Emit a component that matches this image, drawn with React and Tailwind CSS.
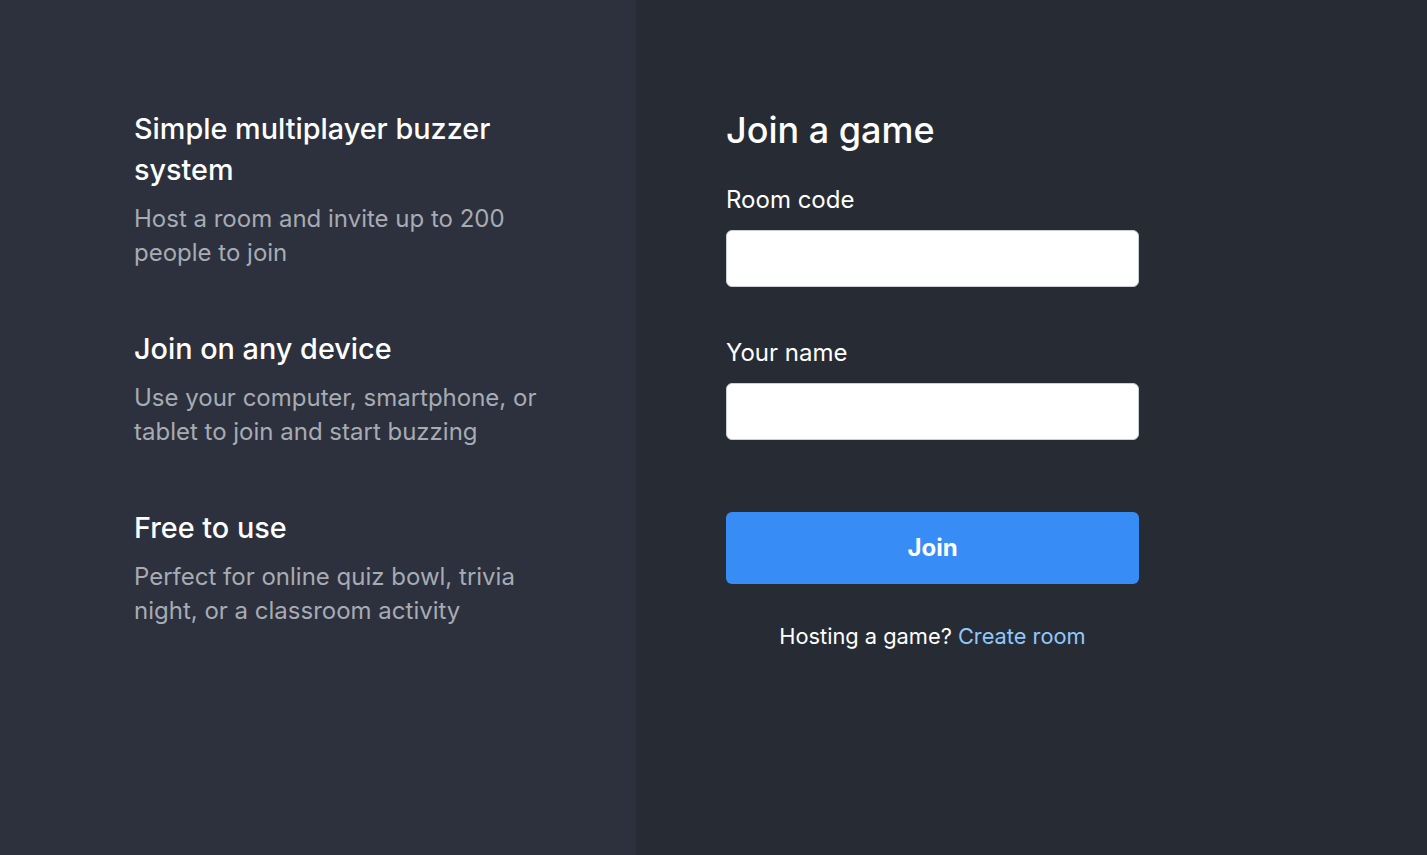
import React from "react";

const features = [
  {
    title: "Simple multiplayer buzzer system",
    text: "Host a room and invite up to 200 people to join",
  },
  {
    title: "Join on any device",
    text: "Use your computer, smartphone, or tablet to join and start buzzing",
  },
  {
    title: "Free to use",
    text: "Perfect for online quiz bowl, trivia night, or a classroom activity",
  },
];

const App = () => {
  return (
    <div
      className="flex min-h-[855px] w-full text-white"
      style={{ fontFamily: "Inter, 'Noto Sans', sans-serif" }}
    >
      {/* Features */}
      <div className="w-[636px] shrink-0 bg-[#2c313d] pl-[134px] pt-[108px]">
        <div className="flex w-[420px] flex-col gap-[58px]">
          {features.map((f) => (
            <div key={f.title}>
              <h2 className="text-[28.8px] leading-[41px] font-medium">{f.title}</h2>
              <p className="mt-[12px] text-[24px] leading-[34px] text-[#a7abb3]">{f.text}</p>
            </div>
          ))}
        </div>
      </div>

      {/* Join form */}
      <div className="flex-1 bg-[#272b34] pl-[90px] pt-[106px]">
        <div className="flex w-[413px] flex-col">
          <h1 className="text-[36px] leading-[48px] font-medium">Join a game</h1>
          <label className="mt-[29px] text-[24px] leading-[34px]">Room code</label>
          <input className="mt-[13px] h-[57px] rounded-md border border-[#cbd0d8] bg-white px-4 text-black outline-none" />
          <label className="mt-[49px] text-[24px] leading-[34px]">Your name</label>
          <input className="mt-[13px] h-[57px] rounded-md border border-[#cbd0d8] bg-white px-4 text-black outline-none" />
          <button className="mt-[72px] h-[72px] rounded-md bg-[#388cf6] text-[24px] font-bold text-white">
            Join
          </button>
          <p className="mt-[36px] text-center text-[21.8px] leading-[33px]">
            Hosting a game?{" "}
            <a href="#" className="text-[#90c8fb]">
              Create room
            </a>
          </p>
        </div>
      </div>
    </div>
  );
};

export default App;
